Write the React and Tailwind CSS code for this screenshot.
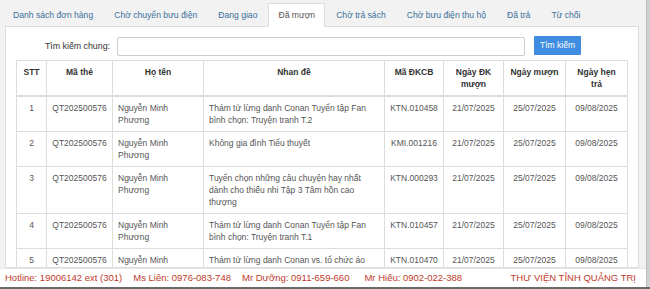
import { useState } from "react";

const tabs = [
  "Danh sách đơn hàng",
  "Chờ chuyển bưu điện",
  "Đang giao",
  "Đã mượn",
  "Chờ trả sách",
  "Chờ bưu điện thu hộ",
  "Đã trả",
  "Từ chối",
];

const rows = [
  {
    stt: 1,
    title: "Thám tử lừng danh Conan Tuyển tập Fan bình chọn: Truyện tranh T.2",
    code: "KTN.010458",
  },
  { stt: 2, title: "Không gia đình Tiểu thuyết", code: "KMI.001216" },
  {
    stt: 3,
    title:
      "Tuyển chọn những câu chuyện hay nhất dành cho thiếu nhi Tập 3 Tâm hồn cao thượng",
    code: "KTN.000293",
  },
  {
    stt: 4,
    title: "Thám tử lừng danh Conan Tuyển tập Fan bình chọn: Truyện tranh T.1",
    code: "KTN.010457",
  },
  {
    stt: 5,
    title:
      "Thám tử lừng danh Conan vs. tổ chức áo đen Tuyển tập đặc biệt : Truyện tranh : Sách tranh",
    code: "KTN.010470",
  },
];

function App() {
  const [active, setActive] = useState("Đã mượn");
  const [query, setQuery] = useState("");

  const th =
    "border border-[#ddd] border-b-2 px-[5px] py-[5px] align-top text-center font-bold text-[#333]";
  const td = "border border-[#ddd] px-[5px] py-[5px] align-top";

  return (
    <div className="h-[289px] w-[650px] overflow-hidden flex flex-col bg-[#f2f2f2] font-['Liberation_Sans',Arial,sans-serif]">
      <div className="flex flex-1 min-h-0">
        <div className="flex-1 min-w-0 flex flex-col">
          {/* tabs */}
          <div className="flex pl-[3px] pt-[3px] relative z-10">
            {tabs.map((t) => (
              <button
                key={t}
                onClick={() => setActive(t)}
                className={
                  "mr-[1px] -mb-px border px-[9px] py-[5px] text-[8.6px] leading-[12px] rounded-t-[2px] " +
                  (active === t
                    ? "bg-white border-[#ddd] border-b-white text-[#555]"
                    : "border-transparent text-[#3b6f9a]")
                }
              >
                {t}
              </button>
            ))}
          </div>

          {/* panel */}
          <div className="ml-[5px] mr-[7px] flex-1 min-h-0 overflow-hidden bg-white border border-[#ddd] p-[10px] pb-0">
            <div className="flex items-center h-[19px]">
              <label className="w-[94px] text-right text-[8.8px] text-[#333]">
                Tìm kiếm chung:
              </label>
              <input
                value={query}
                onChange={(e) => setQuery(e.target.value)}
                className="ml-[7px] w-[408px] h-[19px] border border-[#ccc] rounded-[2px] bg-white outline-none px-1 text-[8.5px]"
              />
              <button className="ml-[9px] -mt-[2px] w-[47px] h-[19px] bg-[#3f8de0] text-white text-[8.5px] rounded-[1px]">
                Tìm kiếm
              </button>
            </div>

            <table className="mt-[4px] w-[611px] border-collapse table-fixed text-[8.5px] leading-[12px] text-[#555]">
              <colgroup>
                <col className="w-[30px]" />
                <col className="w-[66px]" />
                <col className="w-[91px]" />
                <col className="w-[181px]" />
                <col className="w-[59px]" />
                <col className="w-[60px]" />
                <col className="w-[62px]" />
                <col className="w-[62px]" />
              </colgroup>
              <thead>
                <tr>
                  <th className={th}>STT</th>
                  <th className={th}>Mã thẻ</th>
                  <th className={th}>Họ tên</th>
                  <th className={th}>Nhan đề</th>
                  <th className={th}>Mã ĐKCB</th>
                  <th className={th}>
                    Ngày ĐK
                    <br />
                    mượn
                  </th>
                  <th className={th}>Ngày mượn</th>
                  <th className={th}>
                    Ngày hẹn
                    <br />
                    trả
                  </th>
                </tr>
              </thead>
              <tbody>
                {rows.map((r) => (
                  <tr key={r.stt}>
                    <td className={td + " text-center"}>{r.stt}</td>
                    <td className={td + " text-center"}>QT202500576</td>
                    <td className={td}>Nguyễn Minh Phương</td>
                    <td className={td}>{r.title}</td>
                    <td className={td + " text-center"}>{r.code}</td>
                    <td className={td + " text-center"}>21/07/2025</td>
                    <td className={td + " text-center"}>25/07/2025</td>
                    <td className={td + " text-center"}>09/08/2025</td>
                  </tr>
                ))}
              </tbody>
            </table>
          </div>

          {/* footer */}
          <div className="h-[19px] shrink-0 bg-white border-t border-[#e6e6e6] flex items-center pl-[5px] pr-[10px] text-[9.5px] text-[#c0392b]">
            <span>Hotline: 19006142 ext (301)</span>
            <span className="ml-[11px]">Ms Liên: 0976-083-748</span>
            <span className="ml-[11px]">Mr Dưỡng: 0911-659-660</span>
            <span className="ml-[15px]">Mr Hiếu: 0902-022-388</span>
            <span className="ml-auto">THƯ VIỆN TỈNH QUẢNG TRỊ</span>
          </div>
        </div>

        {/* scrollbar */}
        <div className="w-[4px] shrink-0 bg-[#d0d0d0] border-l border-[#bdbdbd]" />
      </div>
      <div className="h-[2px] shrink-0 bg-[#6a6a6a]" />
    </div>
  );
}

export default App;
